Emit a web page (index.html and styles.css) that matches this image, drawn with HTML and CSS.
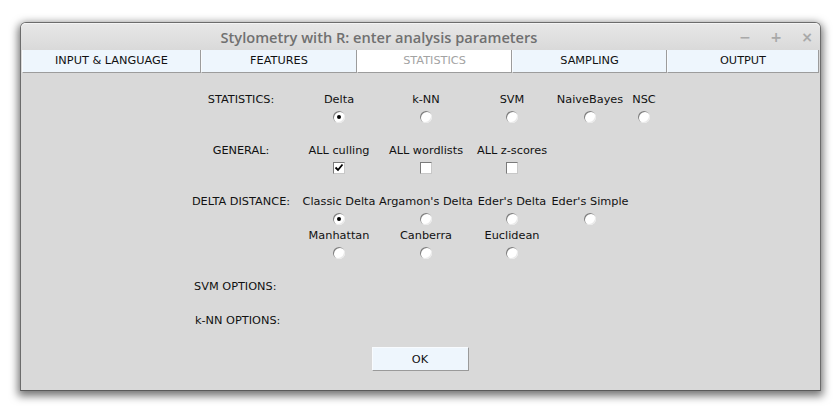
FILE: index.html
```html
<!DOCTYPE html>
<html>
<head>
<meta charset="utf-8">
<link rel="stylesheet" href="styles.css">
</head>
<body>
<div class="window">
  <div class="titlebar">
    <div class="title">Stylometry with R: enter analysis parameters</div>
    <div class="controls"><span class="ctl">&minus;</span><span class="ctl">+</span><span class="ctl">&times;</span></div>
  </div>
  <div class="tabs">
    <div class="tab t1">INPUT &amp; LANGUAGE</div>
    <div class="tab t2">FEATURES</div>
    <div class="tab t3 active">STATISTICS</div>
    <div class="tab t4">SAMPLING</div>
    <div class="tab t5">OUTPUT</div>
  </div>
  <div class="content">
    <div class="form">
      <div class="lbl">STATISTICS:</div>
      <div class="opt">Delta</div>
      <div class="opt">k-NN</div>
      <div class="opt">SVM</div>
      <div class="opt">NaiveBayes</div>
      <div class="opt">NSC</div>

      <div class="c1"></div>
      <div class="ctrl"><span class="radio on"></span></div>
      <div class="ctrl"><span class="radio"></span></div>
      <div class="ctrl"><span class="radio"></span></div>
      <div class="ctrl"><span class="radio"></span></div>
      <div class="ctrl"><span class="radio"></span></div>

      <div class="blank"></div>

      <div class="lbl">GENERAL:</div>
      <div class="opt">ALL culling</div>
      <div class="opt">ALL wordlists</div>
      <div class="opt">ALL z-scores</div>

      <div class="c1"></div>
      <div class="ctrl"><span class="check"><svg width="10" height="10" viewBox="0 0 10 10"><path d="M1.5 4.5 L4 7 L8.5 1.5" fill="none" stroke="#000" stroke-width="1.8"/></svg></span></div>
      <div class="ctrl"><span class="check"></span></div>
      <div class="ctrl"><span class="check"></span></div>

      <div class="blank"></div>

      <div class="lbl">DELTA DISTANCE:</div>
      <div class="opt">Classic Delta</div>
      <div class="opt">Argamon's Delta</div>
      <div class="opt">Eder's Delta</div>
      <div class="opt">Eder's Simple</div>

      <div class="c1"></div>
      <div class="ctrl"><span class="radio on"></span></div>
      <div class="ctrl"><span class="radio"></span></div>
      <div class="ctrl"><span class="radio"></span></div>
      <div class="ctrl"><span class="radio"></span></div>

      <div class="c1"></div>
      <div class="opt">Manhattan</div>
      <div class="opt">Canberra</div>
      <div class="opt">Euclidean</div>

      <div class="c1"></div>
      <div class="ctrl"><span class="radio"></span></div>
      <div class="ctrl"><span class="radio"></span></div>
      <div class="ctrl"><span class="radio"></span></div>

      <div class="blank"></div>

      <div class="lbl sub svm">SVM OPTIONS:</div>
      <div class="blank"></div>
      <div class="lbl sub knn">k-NN OPTIONS:</div>
      <div class="blank"></div>
    </div>
    <div class="okrow"><button class="ok">OK</button></div>
  </div>
</div>
</body>
</html>
```
FILE: styles.css
```css
html, body {
  margin: 0;
  padding: 0;
  background: #ffffff;
}
body {
  width: 839px;
  height: 417px;
  overflow: hidden;
  font-family: "DejaVu Sans", sans-serif;
  font-size: 11.3px;
  color: #111;
}
.window {
  margin: 22px 0 0 20px;
  width: 799px;
  height: 367px;
  border: 1px solid #6c6c6c;
  border-bottom-color: #5a5a5a;
  border-radius: 6px 6px 0 0;
  background: #d9d9d9;
  box-shadow: 0 3px 9px 2px rgba(0,0,0,0.55);
  display: flex;
  flex-direction: column;
}
.titlebar {
  height: 27px;
  display: flex;
  align-items: center;
  border-radius: 5px 5px 0 0;
  background: linear-gradient(#e8e8e8, #d9d9d9);
  box-shadow: inset 0 1px 0 #f4f4f4;
}
.title {
  flex: 1;
  text-align: center;
  font-family: "Open Sans", sans-serif;
  font-weight: 600;
  font-size: 14.6px;
  color: #707070;
  padding-top: 1px;
}
.controls {
  width: 83px;
  display: flex;
  justify-content: space-between;
  padding-right: 5px;
  box-sizing: border-box;
  color: #a9a9a9;
  font-size: 14px;
  font-weight: bold;
}
.ctl {
  width: 16px;
  text-align: center;
}
.tabs {
  display: flex;
  height: 23px;
  margin: 0 1px;
}
.tab {
  box-sizing: border-box;
  height: 23px;
  line-height: 22px;
  text-align: center;
  background: #eef6fd;
  border-right: 1px solid #9c9c9c;
  border-bottom: 1px solid #9c9c9c;
  border-left: 1px solid #f8fbfe;
  color: #111;
}
.t1 { width: 179px; }
.t2 { width: 156px; }
.t3 { width: 155px; }
.t4 { width: 155px; }
.t5 { flex: 1; }
.tab.active {
  background: #ffffff;
  color: #a3a3a3;
  border-left: 1px solid #ffffff;
}
.content {
  flex: 1;
  padding-top: 18px;
}
.form {
  margin-left: 170px;
  display: grid;
  grid-template-columns: 108px 80px 94px 78px 78px 30px;
  grid-auto-rows: 17px;
  align-items: center;
  justify-items: center;
  white-space: nowrap;
}
.c1 {
  grid-column: 1;
}
.lbl {
  grid-column: 1;
  width: 100px;
  justify-self: start;
  text-align: center;
}
.lbl.sub {
  text-align: left;
  width: auto;
}
.svm { margin-left: 3px; }
.knn { margin-left: 4px; }
.blank {
  grid-column: 1 / -1;
}
.ctrl {
  display: flex;
  justify-content: center;
  align-items: center;
}
.radio {
  display: block;
  box-sizing: border-box;
  width: 12px;
  height: 12px;
  border-radius: 50%;
  background: #ffffff;
  box-shadow: inset 1px 1px 0 #7d7d7d, inset -1px -1px 0 #e9e9e9;
  position: relative;
}
.radio.on::after {
  content: "";
  position: absolute;
  left: 4px;
  top: 4px;
  width: 4px;
  height: 4px;
  border-radius: 50%;
  background: #000;
}
.check {
  display: flex;
  align-items: center;
  justify-content: center;
  box-sizing: border-box;
  width: 12px;
  height: 12px;
  background: #ffffff;
  border-top: 1px solid #7a7a7a;
  border-left: 1px solid #7a7a7a;
  border-right: 1px solid #c8c8c8;
  border-bottom: 1px solid #c8c8c8;
}
.okrow {
  margin-top: 1px;
  display: flex;
  justify-content: center;
}
.ok {
  width: 97px;
  height: 24px;
  margin-left: -1px;
  background: #eef6fd;
  border: none;
  border-right: 1px solid #9a9a9a;
  border-bottom: 1px solid #9a9a9a;
  border-top: 1px solid #f8fbfe;
  border-left: 1px solid #f8fbfe;
  font-family: "DejaVu Sans", sans-serif;
  font-size: 11.3px;
  color: #111;
  padding: 0;
}
```
